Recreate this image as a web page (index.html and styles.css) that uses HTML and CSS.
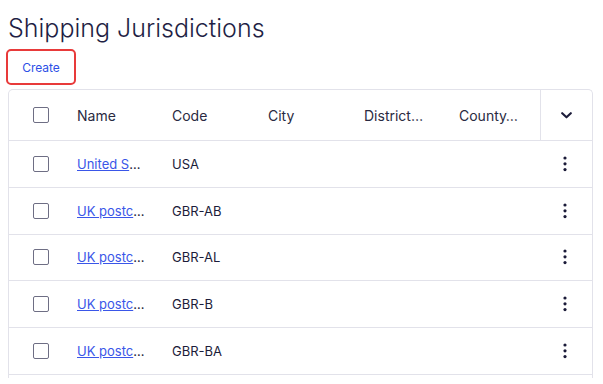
FILE: index.html
```html
<!DOCTYPE html>
<html>
<head>
<title>Shipping Jurisdictions</title>
<link rel="stylesheet" href="styles.css">
</head>
<body>

<h1 class='title'>Shipping Jurisdictions</h1>
<button class='create'>Create</button>

<div class='grid-wrap'>
    <div class='row head'>
        <div class='cell check'><span class='box'></span></div>
        <div class='cell'>Name</div>
        <div class='cell'>Code</div>
        <div class='cell'>City</div>
        <div class='cell'>District…</div>
        <div class='cell'>County…</div>
        <div class='cell act sep'>
            <svg width='11' height='7' viewBox='0 0 11 7'><polyline points='1.2,1.2 5.5,5.3 9.8,1.2' fill='none' stroke='#1c1c3a' stroke-width='2.1' stroke-linecap='round' stroke-linejoin='round'/></svg>
        </div>
    </div>
    <div class='row'>
        <div class='cell check'><span class='box'></span></div>
        <div class='cell'><a href='#'>United S</a>…</div>
        <div class='cell'>USA</div>
        <div class='cell'></div>
        <div class='cell'></div>
        <div class='cell'></div>
        <div class='cell act'><svg class='kebab' width='6' height='16' viewBox='0 0 6 16'><circle cx='3' cy='2' r='1.6'/><circle cx='3' cy='7.8' r='1.6'/><circle cx='3' cy='13.6' r='1.6'/></svg></div>
    </div>
    <div class='row'>
        <div class='cell check'><span class='box'></span></div>
        <div class='cell'><a href='#'>UK postc</a>…</div>
        <div class='cell'>GBR-AB</div>
        <div class='cell'></div>
        <div class='cell'></div>
        <div class='cell'></div>
        <div class='cell act'><svg class='kebab' width='6' height='16' viewBox='0 0 6 16'><circle cx='3' cy='2' r='1.6'/><circle cx='3' cy='7.8' r='1.6'/><circle cx='3' cy='13.6' r='1.6'/></svg></div>
    </div>
    <div class='row'>
        <div class='cell check'><span class='box'></span></div>
        <div class='cell'><a href='#'>UK postc</a>…</div>
        <div class='cell'>GBR-AL</div>
        <div class='cell'></div>
        <div class='cell'></div>
        <div class='cell'></div>
        <div class='cell act'><svg class='kebab' width='6' height='16' viewBox='0 0 6 16'><circle cx='3' cy='2' r='1.6'/><circle cx='3' cy='7.8' r='1.6'/><circle cx='3' cy='13.6' r='1.6'/></svg></div>
    </div>
    <div class='row'>
        <div class='cell check'><span class='box'></span></div>
        <div class='cell'><a href='#'>UK postc</a>…</div>
        <div class='cell'>GBR-B</div>
        <div class='cell'></div>
        <div class='cell'></div>
        <div class='cell'></div>
        <div class='cell act'><svg class='kebab' width='6' height='16' viewBox='0 0 6 16'><circle cx='3' cy='2' r='1.6'/><circle cx='3' cy='7.8' r='1.6'/><circle cx='3' cy='13.6' r='1.6'/></svg></div>
    </div>
    <div class='row'>
        <div class='cell check'><span class='box'></span></div>
        <div class='cell'><a href='#'>UK postc</a>…</div>
        <div class='cell'>GBR-BA</div>
        <div class='cell'></div>
        <div class='cell'></div>
        <div class='cell'></div>
        <div class='cell act'><svg class='kebab' width='6' height='16' viewBox='0 0 6 16'><circle cx='3' cy='2' r='1.6'/><circle cx='3' cy='7.8' r='1.6'/><circle cx='3' cy='13.6' r='1.6'/></svg></div>
    </div>
</div>

</body>
</html>
```

FILE: styles.css
```css
html, body {
    margin: 0px;
    background: #fff;
}

body {
    padding: 0px 10px 0px 8px;
    font-family: Inter, "Noto Sans", sans-serif;
    color: #1c1c3a;
}

.title {
    margin: 12px 0px 0px 0px;
    font-size: 25px;
    line-height: 32px;
    font-weight: 300;
    color: #1f1f45;
}

.create {
    display: block;
    box-sizing: border-box;
    margin: 5px 0px 0px -2px;
    width: 70px;
    height: 36px;
    padding: 0px;
    background: #fff;
    border: 2px solid #e83a3a;
    border-radius: 5px;
    font-family: inherit;
    font-size: 12px;
    color: #2d4fe6;
}

.grid-wrap {
    box-sizing: border-box;
    margin-top: 4px;
    height: 289px;
    overflow: hidden;
    border: 1px solid #e2e2ea;
    border-bottom: none;
    border-radius: 5px 5px 0px 0px;
}

.row {
    display: grid;
    grid-template-columns: 68px 95px 96px 96px 95px 81px 1fr;
    box-sizing: border-box;
    height: 46.8px;
    border-bottom: 1px solid #e2e2ea;
    font-size: 13px;
}

.row.head {
    height: 51px;
    font-size: 14px;
    color: #2a2a42;
}

.cell {
    display: flex;
    align-items: center;
    white-space: nowrap;
    min-width: 0px;
}

.cell a {
    color: #3a56e8;
    text-decoration: underline;
}

.check {
    padding-left: 24px;
}

.box {
    display: block;
    box-sizing: border-box;
    width: 16px;
    height: 16px;
    border: 1.5px solid #6e6e84;
    border-radius: 2px;
}

.act {
    justify-content: center;
}

.sep {
    border-left: 1px solid #e2e2ea;
}

.kebab {
    fill: #1a1a38;
    margin-left: -2px;
}
```
